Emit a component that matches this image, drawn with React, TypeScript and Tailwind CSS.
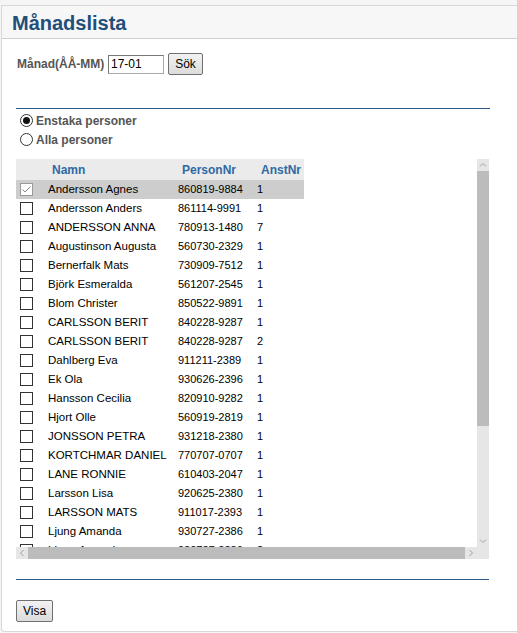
const rows: [string, string, string][] = [
  ["Andersson Agnes", "860819-9884", "1"],
  ["Andersson Anders", "861114-9991", "1"],
  ["ANDERSSON ANNA", "780913-1480", "7"],
  ["Augustinson Augusta", "560730-2329", "1"],
  ["Bernerfalk Mats", "730909-7512", "1"],
  ["Björk Esmeralda", "561207-2545", "1"],
  ["Blom Christer", "850522-9891", "1"],
  ["CARLSSON BERIT", "840228-9287", "1"],
  ["CARLSSON BERIT", "840228-9287", "2"],
  ["Dahlberg Eva", "911211-2389", "1"],
  ["Ek Ola", "930626-2396", "1"],
  ["Hansson Cecilia", "820910-9282", "1"],
  ["Hjort Olle", "560919-2819", "1"],
  ["JONSSON PETRA", "931218-2380", "1"],
  ["KORTCHMAR DANIEL", "770707-0707", "1"],
  ["LANE RONNIE", "610403-2047", "1"],
  ["Larsson Lisa", "920625-2380", "1"],
  ["LARSSON MATS", "911017-2393", "1"],
  ["Ljung Amanda", "930727-2386", "1"],
  ["Ljung Amanda", "930727-2386", "2"],
];

function Box({ checked }: { checked?: boolean }) {
  return (
    <div className={`w-[13px] h-[13px] border bg-white flex items-center justify-center ${checked ? "border-[#9a9a9a]" : "border-[#333]"}`}>
      {checked && (
        <svg width="11" height="11" viewBox="0 0 11 11">
          <path d="M1.5 5.5 L4 8 L9.5 2.5" stroke="#8a8a8a" strokeWidth="1" fill="none" />
        </svg>
      )}
    </div>
  );
}

function Radio({ checked, label }: { checked?: boolean; label: string }) {
  return (
    <div className="flex items-center h-[19px]">
      <div className="w-[13px] h-[13px] ml-[4px] rounded-full border border-[#333] bg-white flex items-center justify-center">
        {checked && <div className="w-[7px] h-[7px] rounded-full bg-[#111]" />}
      </div>
      <span className="ml-[3px] text-[12px] font-bold text-[#555]">{label}</span>
    </div>
  );
}

function Chevron({ d }: { d: string }) {
  return (
    <svg width="8" height="8" viewBox="0 0 8 8">
      <path d={d} stroke="#a0a0a0" strokeWidth="1" fill="none" />
    </svg>
  );
}

export default function App() {
  return (
    <div className="w-[517px] h-[633px] bg-[#f5f5f5] pt-[5px] overflow-hidden font-['Liberation_Sans',Arial,sans-serif]">
      <div className="h-[627px] ml-[1px] bg-white border-t border-l border-b border-[#d8d8d8] rounded-bl-[4px]">
        <div className="h-[33px] bg-[#f7f7f7] border-b border-[#d0d0d0] flex items-center pl-[10px] pt-[1px]">
          <h1 className="text-[20px] font-bold text-[#1f4f7a] leading-none">Månadslista</h1>
        </div>

        <div className="pl-[14px] w-[488px]">
          <div className="flex items-center h-[22px] mt-[14px]">
            <span className="text-[12px] font-bold text-[#555] w-[92px] pl-[1px]">Månad(ÅÅ-MM)</span>
            <div className="w-[56px] h-[19px] border border-[#aaa] border-t-[#777] border-l-[#777] bg-white text-[12px] pl-[2px] leading-[17px]">17-01</div>
            <button className="ml-[4px] w-[35px] h-[22px] border border-[#707070] bg-gradient-to-b from-[#f2f2f2] to-[#dcdcdc] text-[12px] rounded-[2px]">Sök</button>
          </div>

          <div className="mt-[33px] border-t border-[#2f5f8f]" />

          <div className="mt-[2px]">
            <Radio checked label="Enstaka personer" />
            <Radio label="Alla personer" />
          </div>

          <div className="mt-[10px] w-[473px] h-[400px] grid grid-cols-[461px_12px] grid-rows-[388px_12px]">
            <div className="overflow-hidden text-black">
              <div className="w-[288px] h-[21px] bg-[#ebebeb] grid grid-cols-[36px_130px_79px_43px] items-center text-[12px] text-[#2f6aa3] font-bold">
                <span />
                <span>Namn</span>
                <span>PersonNr</span>
                <span>AnstNr</span>
              </div>
              {rows.map(([n, p, a], i) => (
                <div
                  key={i}
                  className={`w-[288px] h-[19px] grid grid-cols-[32px_130px_79px_47px] items-center text-[11.5px] ${i === 0 ? "bg-[#cdcdcd]" : ""}`}
                >
                  <div className="pl-[4px]">
                    <Box checked={i === 0} />
                  </div>
                  <span className="whitespace-nowrap">{n}</span>
                  <span className="text-[11px]">{p}</span>
                  <span className="text-[11px]">{a}</span>
                </div>
              ))}
            </div>

            <div className="bg-[#e6e6e6] flex flex-col">
              <div className="h-[12px] flex items-center justify-center">
                <Chevron d="M1 5.5 L4 2.5 L7 5.5" />
              </div>
              <div className="h-[255px] bg-[#bcbcbc]" />
              <div className="flex-1" />
              <div className="h-[12px] flex items-center justify-center">
                <Chevron d="M1 2.5 L4 5.5 L7 2.5" />
              </div>
            </div>

            <div className="bg-[#e6e6e6] flex">
              <div className="w-[12px] flex items-center justify-center">
                <Chevron d="M5.5 1 L2.5 4 L5.5 7" />
              </div>
              <div className="w-[437px] bg-[#bcbcbc]" />
              <div className="w-[12px] flex items-center justify-center">
                <Chevron d="M2.5 1 L5.5 4 L2.5 7" />
              </div>
            </div>
            <div className="bg-[#e6e6e6]" />
          </div>

          <div className="mt-[20px] w-[473px] border-t border-[#2f5f8f]" />

          <button className="mt-[20px] w-[37px] h-[22px] border border-[#707070] bg-gradient-to-b from-[#f2f2f2] to-[#dcdcdc] text-[12px] rounded-[2px]">Visa</button>
        </div>
      </div>
    </div>
  );
}
